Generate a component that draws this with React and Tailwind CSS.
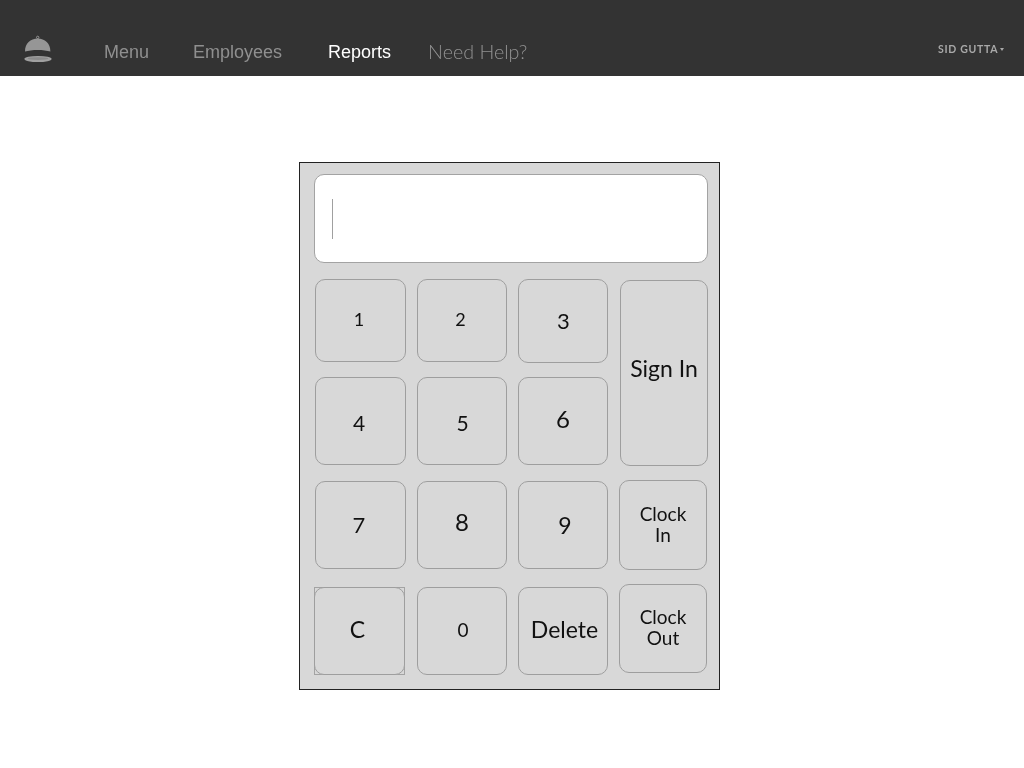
// ── Clock-in keypad screen ────────────────────────────────────────────────────

const NAV_FONT = "font-['Liberation_Sans',Arial,sans-serif]";
const KEY_FONT = "font-['Lato','Open_Sans',sans-serif]";
const KEY_CLASS = 'flex items-center justify-center rounded-[10px] border border-[#9e9e9e] bg-[#d8d8d8] text-[#111] will-change-transform';

// Digits sit at different heights in the picture (old-style figures)
const DIGITS = [
  { label: '1', text: 'text-[18px] pb-[2px] pr-[3px]', size: 'h-[83px] mb-[15px]' },
  { label: '2', text: 'text-[18px] pb-[2px] pr-[3px]', size: 'h-[83px] mb-[15px]' },
  { label: '3', text: 'text-[22px] pb-[1px] pl-[1px]', size: 'h-[84px] mb-[14px]' },
  { label: '4', text: 'text-[21px] pt-[3px] pr-[3px]', size: 'h-[88px] mb-[16px]' },
  { label: '5', text: 'text-[21px] pt-[3px] pl-[1px]', size: 'h-[88px] mb-[16px]' },
  { label: '6', text: 'text-[24px] pb-[4px]', size: 'h-[88px] mb-[16px]' },
  { label: '7', text: 'text-[22px] pb-[1px] pr-[3px]', size: 'h-[88px] mb-[18px]' },
  { label: '8', text: 'text-[24px] pb-[6px]', size: 'h-[88px] mb-[18px]' },
  { label: '9', text: 'text-[23px] pt-[1px] pl-[4px]', size: 'h-[88px] mb-[18px]' },
];

function Cloche() {
  return (
    <svg width="28" height="30" viewBox="0 0 28 30" className="shrink-0">
      <circle cx="13.7" cy="3.4" r="1.2" fill="none" stroke="#9c9c9c" strokeWidth="0.9" />
      <path d="M1 17.6 C1 9.5 6.5 4.6 13.7 4.6 C20.9 4.6 26.4 9.5 26.4 17.6 C20 15.4 7.4 15.4 1 17.6 Z" fill="#969696" />
      <ellipse cx="14" cy="25" rx="13.6" ry="3.1" fill="#a0a0a0" />
      <ellipse cx="14" cy="24.6" rx="10.5" ry="1.4" fill="#8a8a8a" />
    </svg>
  );
}

function Header() {
  return (
    <header className="h-[76px] bg-[#333333] flex items-center pt-[20px] pl-[24px] pr-[20px]">
      <div className="pt-[1px]"><Cloche /></div>
      <nav className={`${NAV_FONT} flex items-center text-[18px] font-light ml-[52px] pt-[8px] will-change-transform`}>
        <span className="text-[#8f8f8f]">Menu</span>
        <span className="text-[#8f8f8f] ml-[44px]">Employees</span>
        <span className="text-white ml-[46px]">Reports</span>
        <span className={`${KEY_FONT} text-[#929292] font-light ml-[37px] text-[19.7px] pb-[1px]`}>Need Help?</span>
      </nav>
      <div className={`${KEY_FONT} ml-auto flex items-center gap-[2px] pt-[3px] text-[10.5px] font-bold tracking-[0.7px] text-[#a8a8a8] will-change-transform`}>
        SID GUTTA
        <span className="w-0 h-0 border-x-[2.5px] border-x-transparent border-t-[3px] border-t-[#a8a8a8]" />
      </div>
    </header>
  );
}

function Keypad() {
  return (
    <div className="w-[421px] h-[528px] ml-[299px] mt-[86px] border border-[#222] bg-[#d8d8d8] pt-[11px] pl-[14px]">
      {/* Display */}
      <div className="w-[394px] h-[89px] rounded-[10px] border border-[#a3a3a3] bg-white flex items-center pl-[17px]">
        <div className="w-px h-[40px] bg-[#a0a0a0]" />
      </div>

      <div className={`${KEY_FONT} flex mt-[16px]`}>
        {/* Digits */}
        <div className="grid grid-cols-[91px_90px_90px] gap-x-[11px] ml-[1px] w-[293px] content-start items-start">
          {DIGITS.map(d => (
            <div key={d.label} className={`${KEY_CLASS} ${d.size}`}>
              <span className={d.text}>{d.label}</span>
            </div>
          ))}

          {/* C has a square outline drawn around it */}
          <div className="w-[91px] h-[88px] -ml-[1px] border border-[#a3a3a3]">
            <div className={`${KEY_CLASS} h-[88px] -m-px text-[23px] pb-[3px] pr-[4px]`}>C</div>
          </div>
          <div className={`${KEY_CLASS} h-[88px] text-[19px] pb-[1px] pl-[2px]`}>0</div>
          <div className={`${KEY_CLASS} h-[88px] text-[23px] pb-[3px] pl-[3px]`}>Delete</div>
        </div>

        {/* Actions */}
        <div className="flex flex-col ml-[11px]">
          <div className={`${KEY_CLASS} w-[88px] h-[186px] ml-[1px] mt-[1px] text-[23px] pb-[10px]`}>Sign In</div>
          <div className={`${KEY_CLASS} w-[88px] h-[90px] mt-[14px] text-[19px] leading-[21px] text-center pb-[2px]`}>Clock<br />In</div>
          <div className={`${KEY_CLASS} w-[88px] h-[89px] mt-[14px] text-[19px] leading-[21px] text-center pb-[3px]`}>Clock<br />Out</div>
        </div>
      </div>
    </div>
  );
}

export default function App() {
  return (
    <div className="min-h-[768px] bg-white overflow-hidden">
      <Header />
      <Keypad />
    </div>
  );
}
